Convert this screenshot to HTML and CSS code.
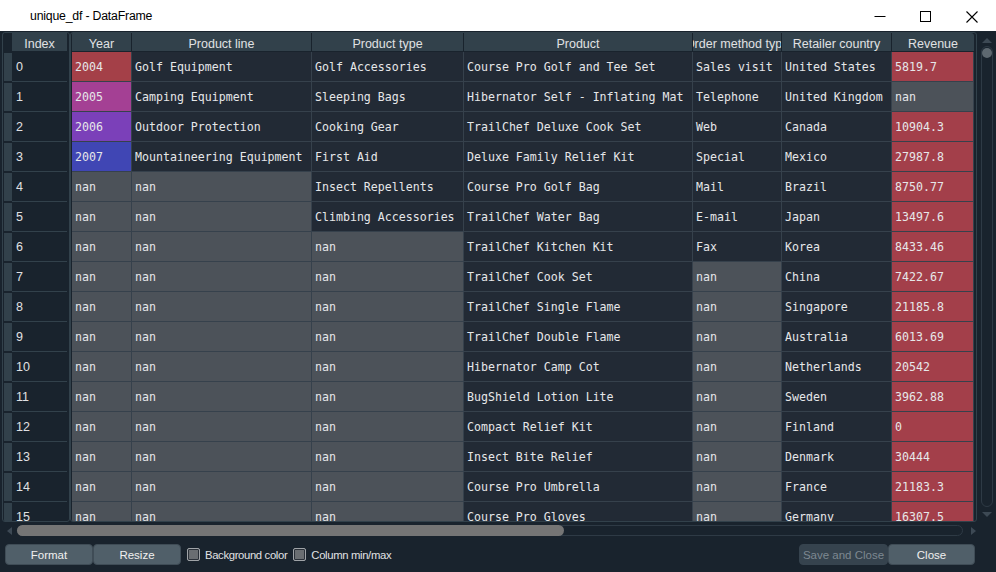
FILE: index.html
```html
<!DOCTYPE html>
<html>
<head>
<meta charset="utf-8">
<link rel="stylesheet" href="styles.css">
</head>
<body>
<div class="window">
  <div class="titlebar">
    <span class="title">unique_df - DataFrame</span>
    <div class="controls">
      <svg class="ctl" width="46" height="30" viewBox="0 0 46 30"><line x1="17.5" y1="15.5" x2="28.5" y2="15.5" stroke="#000" stroke-width="1"/></svg>
      <svg class="ctl" width="46" height="30" viewBox="0 0 46 30"><rect x="17.5" y="10.5" width="10" height="10" fill="none" stroke="#000" stroke-width="1"/></svg>
      <svg class="ctl" width="46" height="30" viewBox="0 0 46 30"><path d="M17.5 10.5 L28.5 21.5 M28.5 10.5 L17.5 21.5" stroke="#000" stroke-width="1.1" fill="none"/></svg>
    </div>
  </div>

  <div class="main">
    <div class="index-frame">
      <div class="irow ihead"><div class="corner"></div><div class="ih">Index</div></div>
      <div class="irow"><div class="vh"></div><div class="ix">0</div></div>
      <div class="irow"><div class="vh"></div><div class="ix">1</div></div>
      <div class="irow"><div class="vh"></div><div class="ix">2</div></div>
      <div class="irow"><div class="vh"></div><div class="ix">3</div></div>
      <div class="irow"><div class="vh"></div><div class="ix">4</div></div>
      <div class="irow"><div class="vh"></div><div class="ix">5</div></div>
      <div class="irow"><div class="vh"></div><div class="ix">6</div></div>
      <div class="irow"><div class="vh"></div><div class="ix">7</div></div>
      <div class="irow"><div class="vh"></div><div class="ix">8</div></div>
      <div class="irow"><div class="vh"></div><div class="ix">9</div></div>
      <div class="irow"><div class="vh"></div><div class="ix">10</div></div>
      <div class="irow"><div class="vh"></div><div class="ix">11</div></div>
      <div class="irow"><div class="vh"></div><div class="ix">12</div></div>
      <div class="irow"><div class="vh"></div><div class="ix">13</div></div>
      <div class="irow"><div class="vh"></div><div class="ix">14</div></div>
      <div class="irow"><div class="vh"></div><div class="ix">15</div></div>
    </div>

    <div class="data-frame">
      <div class="grid">
        <div class="hc"><span>Year</span></div>
        <div class="hc"><span>Product line</span></div>
        <div class="hc"><span>Product type</span></div>
        <div class="hc"><span>Product</span></div>
        <div class="hc"><span>Order method type</span></div>
        <div class="hc"><span>Retailer country</span></div>
        <div class="hc last"><span>Revenue</span></div>

        <div class="c y04">2004</div><div class="c">Golf Equipment</div><div class="c">Golf Accessories</div><div class="c">Course Pro Golf and Tee Set</div><div class="c">Sales visit</div><div class="c">United States</div><div class="c red">5819.7</div>
        <div class="c y05">2005</div><div class="c">Camping Equipment</div><div class="c">Sleeping Bags</div><div class="c">Hibernator Self - Inflating Mat</div><div class="c">Telephone</div><div class="c">United Kingdom</div><div class="c nan">nan</div>
        <div class="c y06">2006</div><div class="c">Outdoor Protection</div><div class="c">Cooking Gear</div><div class="c">TrailChef Deluxe Cook Set</div><div class="c">Web</div><div class="c">Canada</div><div class="c red">10904.3</div>
        <div class="c y07">2007</div><div class="c">Mountaineering Equipment</div><div class="c">First Aid</div><div class="c">Deluxe Family Relief Kit</div><div class="c">Special</div><div class="c">Mexico</div><div class="c red">27987.8</div>
        <div class="c nan">nan</div><div class="c nan">nan</div><div class="c">Insect Repellents</div><div class="c">Course Pro Golf Bag</div><div class="c">Mail</div><div class="c">Brazil</div><div class="c red">8750.77</div>
        <div class="c nan">nan</div><div class="c nan">nan</div><div class="c">Climbing Accessories</div><div class="c">TrailChef Water Bag</div><div class="c">E-mail</div><div class="c">Japan</div><div class="c red">13497.6</div>
        <div class="c nan">nan</div><div class="c nan">nan</div><div class="c nan">nan</div><div class="c">TrailChef Kitchen Kit</div><div class="c">Fax</div><div class="c">Korea</div><div class="c red">8433.46</div>
        <div class="c nan">nan</div><div class="c nan">nan</div><div class="c nan">nan</div><div class="c">TrailChef Cook Set</div><div class="c nan">nan</div><div class="c">China</div><div class="c red">7422.67</div>
        <div class="c nan">nan</div><div class="c nan">nan</div><div class="c nan">nan</div><div class="c">TrailChef Single Flame</div><div class="c nan">nan</div><div class="c">Singapore</div><div class="c red">21185.8</div>
        <div class="c nan">nan</div><div class="c nan">nan</div><div class="c nan">nan</div><div class="c">TrailChef Double Flame</div><div class="c nan">nan</div><div class="c">Australia</div><div class="c red">6013.69</div>
        <div class="c nan">nan</div><div class="c nan">nan</div><div class="c nan">nan</div><div class="c">Hibernator Camp Cot</div><div class="c nan">nan</div><div class="c">Netherlands</div><div class="c red">20542</div>
        <div class="c nan">nan</div><div class="c nan">nan</div><div class="c nan">nan</div><div class="c">BugShield Lotion Lite</div><div class="c nan">nan</div><div class="c">Sweden</div><div class="c red">3962.88</div>
        <div class="c nan">nan</div><div class="c nan">nan</div><div class="c nan">nan</div><div class="c">Compact Relief Kit</div><div class="c nan">nan</div><div class="c">Finland</div><div class="c red">0</div>
        <div class="c nan">nan</div><div class="c nan">nan</div><div class="c nan">nan</div><div class="c">Insect Bite Relief</div><div class="c nan">nan</div><div class="c">Denmark</div><div class="c red">30444</div>
        <div class="c nan">nan</div><div class="c nan">nan</div><div class="c nan">nan</div><div class="c">Course Pro Umbrella</div><div class="c nan">nan</div><div class="c">France</div><div class="c red">21183.3</div>
        <div class="c nan">nan</div><div class="c nan">nan</div><div class="c nan">nan</div><div class="c">Course Pro Gloves</div><div class="c nan">nan</div><div class="c">Germany</div><div class="c red">16307.5</div>
      </div>
    </div>

    <div class="vscroll">
      <div class="arrow-up"></div>
      <div class="vtrack"><div class="vhandle"></div></div>
      <div class="arrow-down"></div>
    </div>
  </div>

  <div class="hscroll">
    <div class="arrow-left"></div>
    <div class="htrack"><div class="hhandle"></div></div>
    <div class="arrow-right"></div>
  </div>

  <div class="buttons">
    <button class="btn">Format</button>
    <button class="btn">Resize</button>
    <label class="check"><span class="box"></span><span class="lbl">Background color</span></label>
    <label class="check"><span class="box"></span><span class="lbl">Column min/max</span></label>
    <div class="right-btns">
      <button class="btn disabled save">Save and Close</button>
      <button class="btn close">Close</button>
    </div>
  </div>
</div>
</body>
</html>
```

FILE: styles.css
```css
html, body {
  margin: 0;
  padding: 0;
}
body {
  width: 996px;
  height: 572px;
  overflow: hidden;
  background: #19232D;
  font-family: "Liberation Sans", Arial, sans-serif;
  color: #E0E1E3;
}
.window {
  width: 996px;
  height: 572px;
  display: flex;
  flex-direction: column;
}

/* title bar */
.titlebar {
  height: 31px;
  flex: none;
  background: #ffffff;
  display: flex;
  align-items: center;
}
.title {
  margin-left: 30px;
  font-size: 12.3px;
  color: #000;
  letter-spacing: -0.2px;
  margin-top: 1px;
}
.controls {
  margin-left: auto;
  display: flex;
  height: 30px;
  margin-right: 1px;
}
.ctl {
  display: block;
}

/* main table area */
.main {
  margin-top: 1px;
  height: 490px;
  flex: none;
  display: flex;
}
.index-frame {
  margin-left: 2px;
  width: 68px;
  height: 490px;
  box-sizing: border-box;
  border: 1px solid #32414B;
  border-radius: 3px;
  padding: 0 2px 0 1px;
  overflow: hidden;
}
.irow {
  display: flex;
  height: 30px;
}
.irow.ihead {
  height: 19px;
}
.corner {
  width: 8px;
  background: #19232D;
}
.ih {
  width: 55px;
  height: 18px;
  box-sizing: border-box;
  padding-top: 3px;
  background: #32414B;
  display: flex;
  align-items: center;
  justify-content: center;
  font-size: 12.5px;
  color: #E0E1E3;
}
.vh {
  width: 8px;
  height: 28px;
  margin: 1px 0;
  background: #32414B;
}
.ix {
  width: 55px;
  height: 30px;
  border-bottom: 1px solid #32414B;
  display: flex;
  align-items: center;
  padding-left: 4px;
  box-sizing: border-box;
  font-size: 12.5px;
  color: #E0E1E3;
}

.data-frame {
  width: 907px;
  height: 490px;
  box-sizing: border-box;
  border: 1px solid #32414B;
  border-radius: 3px;
  padding: 0 2px 0 1px;
  overflow: hidden;
}
.grid {
  display: grid;
  grid-template-columns: 60px 180px 152px 229px 89px 110px 82px;
  grid-template-rows: 19px repeat(16, 30px);
  height: 488px;
  overflow: hidden;
}
.hc {
  background: #32414B;
  border-right: 1px solid #19232D;
  border-bottom: 1px solid #19232D;
  box-sizing: border-box;
  padding-top: 3px;
  display: flex;
  align-items: center;
  justify-content: center;
  overflow: hidden;
  white-space: nowrap;
  font-size: 12.5px;
  color: #E0E1E3;
}
.hc span {
  flex: none;
}
.hc.last {
  border-right: none;
  border-top-right-radius: 3px;
}
.c {
  background: #222A35;
  border-right: 1px solid #36414C;
  border-bottom: 1px solid #36414C;
  display: flex;
  align-items: center;
  padding-left: 3px;
  white-space: nowrap;
  overflow: hidden;
  font-family: "DejaVu Sans Mono", "Liberation Mono", monospace;
  font-size: 11.6px;
  color: #E6E7E9;
}
.c.nan { background: #4C5259; }
.c.red { background: #A33F4A; }
.c.y04 { background: #A44048; }
.c.y05 { background: #A44094; }
.c.y06 { background: #7B40B9; }
.c.y07 { background: #4046B4; }

/* vertical scrollbar */
.vscroll {
  width: 19px;
  display: flex;
  flex-direction: column;
  align-items: center;
  padding-top: 6px;
  box-sizing: border-box;
}
.arrow-up {
  width: 0;
  height: 0;
  border-left: 5px solid transparent;
  border-right: 5px solid transparent;
  border-bottom: 5px solid #3D4954;
  margin-bottom: 3px;
}
.arrow-down {
  width: 0;
  height: 0;
  border-left: 5px solid transparent;
  border-right: 5px solid transparent;
  border-top: 5px solid #3D4954;
  margin-top: 5px;
}
.vtrack {
  width: 12px;
  height: 461px;
  box-sizing: border-box;
  border: 1px solid #2E3A45;
  border-radius: 6px;
  padding: 1px 0 0 0;
  display: flex;
  justify-content: center;
}
.vhandle {
  width: 10px;
  height: 10px;
  border-radius: 5px;
  background: #5E6870;
}

/* horizontal scrollbar */
.hscroll {
  margin-top: 1px;
  height: 15px;
  flex: none;
  display: flex;
  align-items: center;
}
.arrow-left {
  margin-left: 7px;
  width: 0;
  height: 0;
  border-top: 4px solid transparent;
  border-bottom: 4px solid transparent;
  border-right: 5px solid #3D4954;
}
.htrack {
  margin-left: 5px;
  width: 946px;
  height: 11px;
  box-sizing: border-box;
  border: 1px solid #2E3A45;
  border-radius: 6px;
}
.hhandle {
  margin: -1px 0 0 -1px;
  width: 547px;
  height: 11px;
  border-radius: 6px;
  background: #757575;
}
.arrow-right {
  margin-left: 8px;
  width: 0;
  height: 0;
  border-top: 4px solid transparent;
  border-bottom: 4px solid transparent;
  border-left: 5px solid #3D4954;
}

/* buttons row */
.buttons {
  margin-top: 6px;
  height: 21px;
  flex: none;
  display: flex;
  align-items: center;
  padding-left: 5px;
  padding-right: 21px;
}
.btn {
  height: 21px;
  width: 88px;
  box-sizing: border-box;
  margin: 0;
  padding: 0;
  background: #505F69;
  border: 1px solid #3F4C56;
  border-radius: 4px;
  color: #F0F0F0;
  font-family: "Liberation Sans", Arial, sans-serif;
  font-size: 11.5px;
}
.btn.disabled {
  background: #36434E;
  border-color: #36434E;
  color: #7D8891;
}
.btn.save {
  width: 89px;
}
.btn.close {
  width: 87px;
}
.check {
  display: flex;
  align-items: center;
  margin-left: 6px;
}
.check + .check {
  margin-left: 6px;
}
.box {
  width: 13px;
  height: 13px;
  box-sizing: border-box;
  border: 1px solid #A0A4A8;
  border-radius: 2px;
  background: #6A6E72;
  box-shadow: inset 0 0 0 1px #2A3038;
}
.lbl {
  margin-left: 5px;
  font-size: 11.3px;
  letter-spacing: -0.35px;
  color: #E0E1E3;
}
.right-btns {
  margin-left: auto;
  display: flex;
}
```
